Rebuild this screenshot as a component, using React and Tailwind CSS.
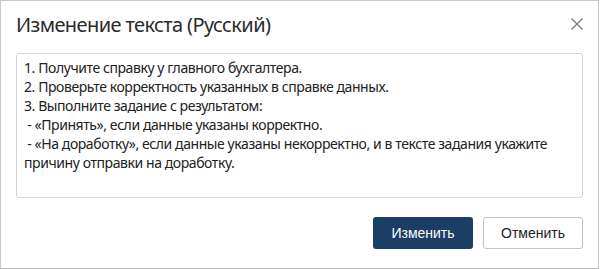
import React from 'react';

const lines = [
  '1. Получите справку у главного бухгалтера.',
  '2. Проверьте корректность указанных в справке данных.',
  '3. Выполните задание с результатом:',
  '\u00a0- «Принять», если данные указаны корректно.',
  '\u00a0- «На доработку», если данные указаны некорректно, и в тексте задания укажите',
  'причину отправки на доработку.',
];

const CloseIcon = () => (
  <svg width="12" height="12" viewBox="0 0 12 12" fill="none">
    <path d="M0.5 0.5L11.5 11.5M11.5 0.5L0.5 11.5" stroke="#7a7a7a" strokeWidth="1.3" />
  </svg>
);

export default function App() {
  return (
    <div className="w-[599px] h-[269px] bg-white border border-[#c9c9c9] border-b-[#bdbdbd] flex flex-col font-['Noto_Sans',sans-serif]">
      {/* header */}
      <div className="flex items-start justify-between pl-[15px] pr-[15px] pt-[10px] h-[52px]">
        <h1 className="text-[20px] leading-[28px] tracking-[-0.6px] text-[#2b2b2b] font-normal">Изменение текста (Русский)</h1>
        <button className="mt-[7px] w-[12px] h-[12px] flex items-center justify-center">
          <CloseIcon />
        </button>
      </div>

      {/* body */}
      <div className="px-[15px]">
        <div className="h-[145px] border border-[#d4d4d4] rounded-[3px] pl-[7px] pt-[4px] text-[14px] leading-[19px] tracking-[-0.42px] text-[#222]">
          {lines.map((l, i) => (
            <div key={i} className="whitespace-pre">{l}</div>
          ))}
        </div>
      </div>

      {/* footer */}
      <div className="flex justify-end gap-[10px] px-[15px] pt-[19px] font-['Liberation_Sans',Arial,sans-serif] text-[14px]">
        <button className="w-[100px] h-[32px] rounded-[3px] bg-[#1a3e66] text-white">Изменить</button>
        <button className="w-[100px] h-[32px] rounded-[3px] bg-white border border-[#c4c4c4] text-[#222]">Отменить</button>
      </div>
    </div>
  );
}
